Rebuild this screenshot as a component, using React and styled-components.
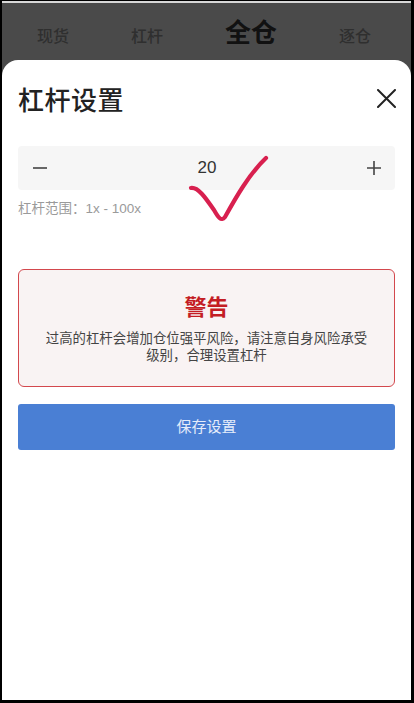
import styled, { createGlobalStyle } from "styled-components";

const GlobalStyle = createGlobalStyle`
  html, body {
    margin: 0;
    padding: 0;
    background: #000;
  }
  * {
    box-sizing: border-box;
  }
`;

const font = `"Noto Sans CJK SC", "Noto Sans", sans-serif`;

const tabs = [
  { label: "现货", active: false },
  { label: "杠杆", active: false },
  { label: "全仓", active: true },
  { label: "逐仓", active: false },
];

export default function App() {
  return (
    <>
      <GlobalStyle />
      <Frame>
        <TopLine />
        <Backdrop>
          <TabBar>
            {tabs.map((tab) => (
              <Tab key={tab.label} $active={tab.active}>
                {tab.label}
              </Tab>
            ))}
          </TabBar>
          <Sheet>
            <SheetHeader>
              <Title>杠杆设置</Title>
              <CloseButton aria-label="close">
                <svg width="19" height="19" viewBox="0 0 19 19">
                  <path d="M1 1 L18 18 M18 1 L1 18" stroke="#222" strokeWidth="2" strokeLinecap="round" />
                </svg>
              </CloseButton>
            </SheetHeader>

            <Stepper>
              <StepButton aria-label="minus">
                <svg width="14" height="14" viewBox="0 0 14 14">
                  <path d="M0 7 H14" stroke="#444" strokeWidth="1.6" />
                </svg>
              </StepButton>
              <StepValue>20</StepValue>
              <StepButton aria-label="plus">
                <svg width="14" height="14" viewBox="0 0 14 14">
                  <path d="M0 7 H14 M7 0 V14" stroke="#444" strokeWidth="1.6" />
                </svg>
              </StepButton>
            </Stepper>
            <RangeText>杠杆范围：1x - 100x</RangeText>

            <Warning>
              <WarningTitle>警告</WarningTitle>
              <WarningText>
                过高的杠杆会增加仓位强平风险，请注意自身风险承受级别，合理设置杠杆
              </WarningText>
            </Warning>

            <SaveButton>保存设置</SaveButton>

            <CheckMark width="90" height="80" viewBox="0 0 90 80">
              <path
                d="M3 34 C10 33 17 43 26 56 C30 63 33 68 37 63 C47 45 61 20 78 4"
                fill="none"
                stroke="#d8204f"
                strokeWidth="4.2"
                strokeLinecap="round"
                strokeLinejoin="round"
              />
            </CheckMark>
          </Sheet>
        </Backdrop>
      </Frame>
    </>
  );
}

const Frame = styled.div`
  width: 414px;
  height: 703px;
  display: flex;
  flex-direction: column;
  border-left: 2px solid #000;
  border-right: 3px solid #000;
  border-bottom: 3px solid #000;
  border-top: 1px solid #000;
  background: #000;
  font-family: ${font};
`;

const TopLine = styled.div`
  height: 2px;
  background: #d8d8d8;
`;

const Backdrop = styled.div`
  flex: 1;
  display: flex;
  flex-direction: column;
  background: #4a4a4a;
`;

const TabBar = styled.div`
  height: 57px;
  display: flex;
  align-items: baseline;
  gap: 62px;
  padding: 15px 0 0 35px;
`;

const Tab = styled.span`
  font-size: ${({ $active }) => ($active ? "26px" : "16px")};
  font-weight: ${({ $active }) => ($active ? 700 : 500)};
  color: ${({ $active }) => ($active ? "#111" : "#2f2f2f")};
  line-height: 1;
`;

const Sheet = styled.div`
  position: relative;
  flex: 1;
  background: #fff;
  border-radius: 16px 16px 0 0;
  padding: 0 16px;
  display: flex;
  flex-direction: column;
`;

const SheetHeader = styled.div`
  display: flex;
  align-items: center;
  justify-content: space-between;
  height: 76px;
`;

const Title = styled.h1`
  margin: 0;
  font-size: 26px;
  font-weight: 500;
  color: #222;
  letter-spacing: 0.5px;
`;

const CloseButton = styled.button`
  border: none;
  background: none;
  padding: 0;
  display: flex;
  margin-right: -1px;
  cursor: pointer;
`;

const Stepper = styled.div`
  margin-top: 10px;
  height: 44px;
  display: flex;
  align-items: center;
  justify-content: space-between;
  padding: 0 14px 0 15px;
  background: #f6f6f6;
  border-radius: 4px;
`;

const StepButton = styled.button`
  border: none;
  background: none;
  padding: 0;
  display: flex;
  cursor: pointer;
`;

const StepValue = styled.span`
  font-family: "Liberation Sans", Arial, sans-serif;
  font-size: 17px;
  color: #333;
`;

const RangeText = styled.div`
  margin-top: 11px;
  font-family: "Liberation Sans", "Noto Sans CJK SC", sans-serif;
  font-size: 13.5px;
  color: #9a9a9a;
  line-height: 16px;
`;

const Warning = styled.div`
  margin-top: 52px;
  height: 118px;
  border: 1px solid #d3484d;
  border-radius: 6px;
  background: #f9f3f3;
  display: flex;
  flex-direction: column;
  align-items: center;
  padding: 21px 24px 0;
`;

const WarningTitle = styled.div`
  font-size: 22px;
  font-weight: 700;
  color: #c41d24;
  line-height: 28px;
`;

const WarningText = styled.p`
  margin: 10px 0 0;
  font-size: 13.4px;
  line-height: 17px;
  color: #444;
  text-align: center;
`;

const SaveButton = styled.button`
  margin-top: 17px;
  height: 46px;
  width: 100%;
  border: none;
  border-radius: 3px;
  background: #4a7fd4;
  color: #e4ecfa;
  font-family: ${font};
  font-size: 15px;
  line-height: 1;
  padding: 0 0 3px;
  cursor: pointer;
`;

const CheckMark = styled.svg`
  position: absolute;
  left: 186px;
  top: 94px;
  pointer-events: none;
`;
